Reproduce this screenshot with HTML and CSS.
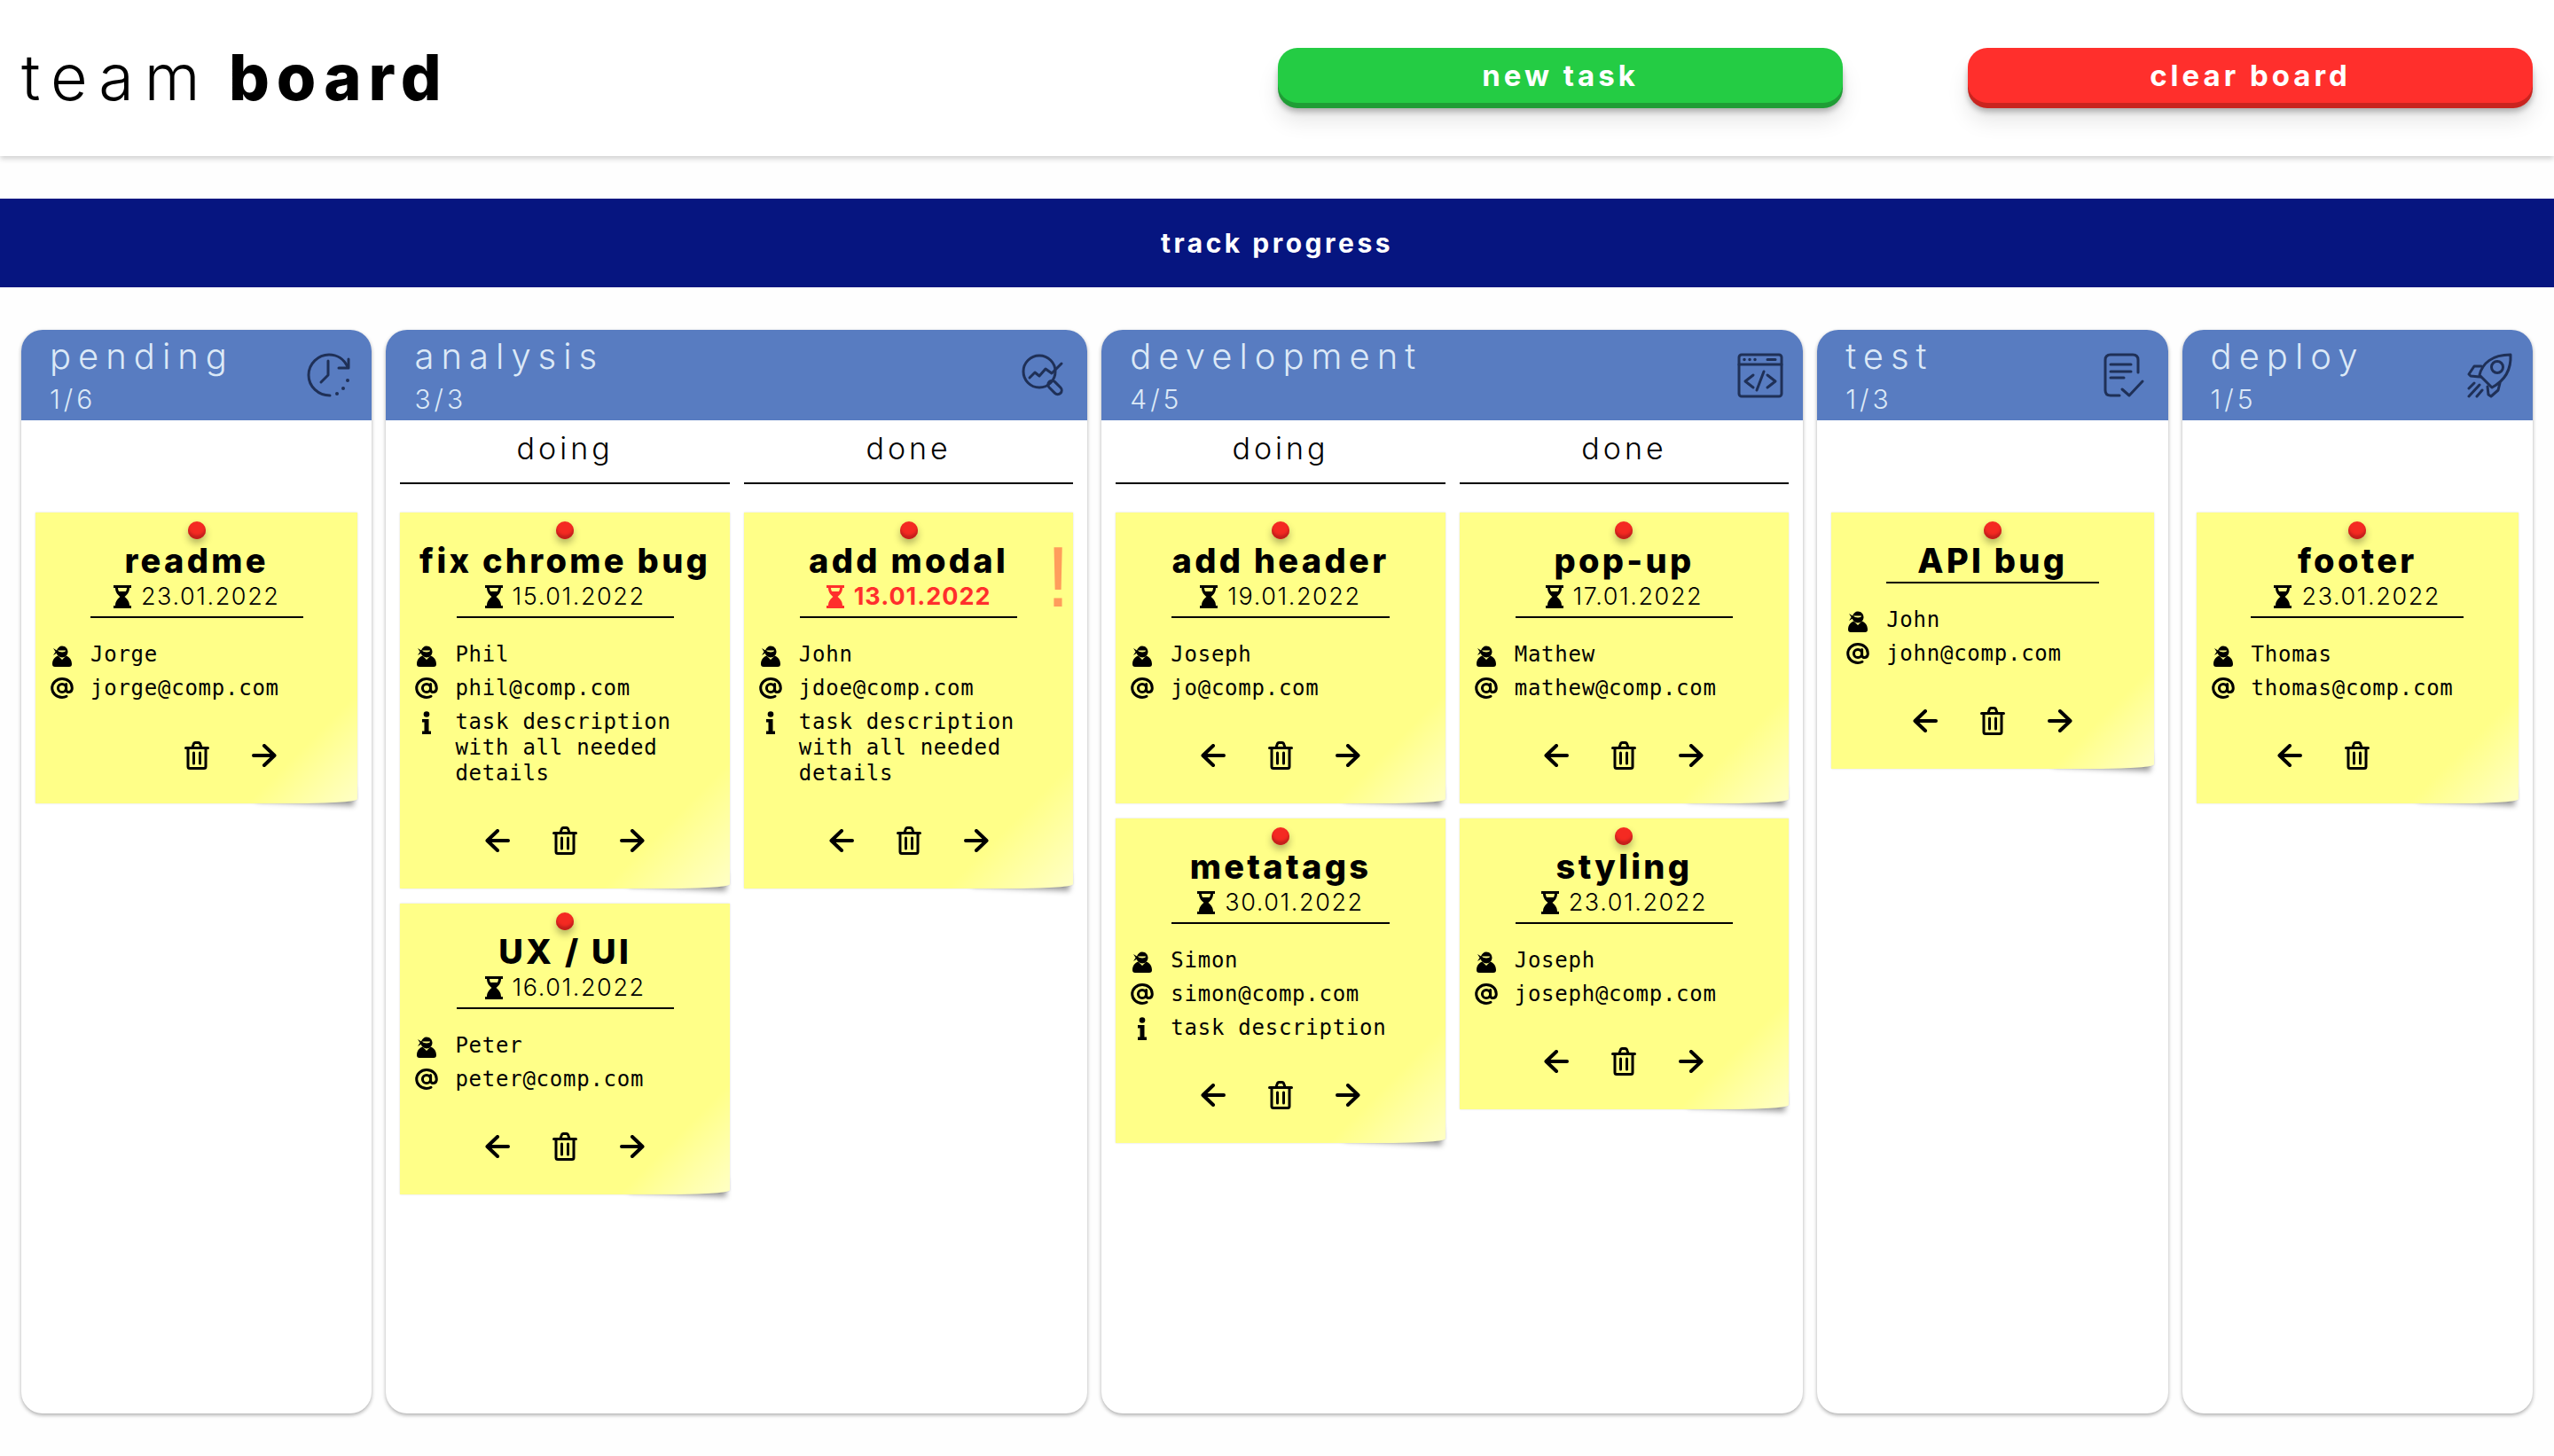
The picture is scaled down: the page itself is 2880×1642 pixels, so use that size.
FILE: index.html
```html
<!DOCTYPE html>
<html lang="en">
  <head>
    <meta charset="UTF-8" />
    <title>team board</title>
    <link rel="stylesheet" href="styles.css">
  </head>
  <body>
    <svg class="sprite" aria-hidden="true">
      <symbol id="i-user" viewBox="0 0 22 26">
        <path d="M1 5l4 2.5c1-3 3.300-5 6-5 3.600 0 6.500 2.900 6.500 6.500s-2.900 6.500-6.500 6.500c-3 0-5.400-2-6.200-4.700L1 13l2.600-4z" fill="currentColor" />
        <path d="M6 7.600h9c.5 2.600-8 2.600-9 0z" fill="#ffff88" />
        <path d="M0 23c0-5 3-8.500 6.500-9.500L11 18l4.500-4.500C19 14.500 22 18 22 23c0 2-1 3-3 3H3c-2 0-3-1-3-3z" fill="currentColor" />
      </symbol>
      <symbol id="i-at" viewBox="0 0 26 24">
        <g fill="none" stroke="currentColor" stroke-width="3" stroke-linecap="round">
          <circle cx="13" cy="12" r="4.600" />
          <path d="M17.600 7.500v6.300c0 4 6.700 4 6.700-1.800C24.300 5.800 19.300 1.500 13 1.500 6.700 1.500 1.700 6.200 1.700 12S6.700 22.500 13 22.500c2 0 3.600-.4 5-1.200" />
        </g>
      </symbol>
      <symbol id="i-info" viewBox="0 0 10 26">
        <circle cx="5" cy="3.500" r="3.300" fill="currentColor" />
        <path d="M0 9h7.500v13.500H10V26H0v-3.500h2.500v-10H0z" fill="currentColor" />
      </symbol>
      <symbol id="i-glass" viewBox="0 0 20 26">
        <path d="M0 0h20v3h-2c0 5-3 8-5.500 10 2.500 2 5.500 5 5.500 10h2v3H0v-3h2c0-5 3-8 5.500-10C5 11 2 8 2 3H0zm5 3c0 1.500.5 3 1.200 4h7.600c.7-1 1.200-2.500 1.200-4z" fill="currentColor" />
      </symbol>
      <symbol id="i-trash" viewBox="0 0 28 32">
        <g fill="none" stroke="currentColor" stroke-width="3" stroke-linecap="round" stroke-linejoin="round">
          <path d="M1.500 7.500h25M9 7l1.200-3.600c.3-1 1-1.900 2-1.900h3.600c1 0 1.700.9 2 1.900L19 7" />
          <path d="M4 7.500v21c0 1.300.7 2 2 2h16c1.300 0 2-.7 2-2v-21M10.500 13v12M17.500 13v12" />
        </g>
      </symbol>
      <symbol id="i-right" viewBox="0 0 28 26">
        <path d="M2 13h23M14 2l11.500 11L14 24" fill="none" stroke="currentColor" stroke-width="4" stroke-linecap="round" stroke-linejoin="round" />
      </symbol>
      <symbol id="i-left" viewBox="0 0 28 26">
        <path d="M26 13H3M14 2L2.500 13 14 24" fill="none" stroke="currentColor" stroke-width="4" stroke-linecap="round" stroke-linejoin="round" />
      </symbol>
    </svg>

    <header class="topbar">
      <h1 class="logo">team <b>board</b></h1>
      <button class="btn btn-green">new task</button>
      <button class="btn btn-red">clear board</button>
    </header>

    <div class="banner">track progress</div>

    <main class="board">
      <!-- pending -->
      <section class="col">
        <div class="col-head">
          <div>
            <h2 class="col-title">pending</h2>
            <div class="col-count">1/6</div>
          </div>
          <svg class="col-icon" viewBox="0 0 52 52">
            <path d="M27 48C14 48 3 38 3 25S14 2 26 2c9 0 17 5 21 14" />
            <path d="M48 7v10H37M25 9v16l-8 8" />
            <path d="M47 31v.1M42 40v.1M35 46v.1" stroke-width="4" />
          </svg>
        </div>
        <div class="lanes lanes-single">
          <div class="lane">
            <article class="note">
              <span class="pin"></span>
              <div class="note-head">
                <h3 class="note-title">readme</h3>
                <div class="note-date"><svg class="ic-glass"><use href="#i-glass" /></svg>23.01.2022</div>
              </div>
              <div class="note-rows">
                <div class="row"><svg class="ic-user"><use href="#i-user" /></svg><span>Jorge</span></div>
                <div class="row"><svg class="ic-at"><use href="#i-at" /></svg><span>jorge@comp.com</span></div>
              </div>
              <div class="actions">
                <span class="slot"></span>
                <svg class="ic-trash"><use href="#i-trash" /></svg>
                <svg class="ic-arrow"><use href="#i-right" /></svg>
              </div>
            </article>
          </div>
        </div>
      </section>

      <!-- analysis -->
      <section class="col">
        <div class="col-head">
          <div>
            <h2 class="col-title">analysis</h2>
            <div class="col-count">3/3</div>
          </div>
          <svg class="col-icon" viewBox="0 0 52 52">
            <circle cx="20" cy="21" r="18" />
            <path d="M9 28l6-6 5 4 7-8 7 5 11-11" />
            <rect x="33" y="30" width="9" height="18" rx="4.500" transform="rotate(-45 37.500 39)" />
          </svg>
        </div>
        <div class="lanes">
          <div class="lane">
            <div class="lane-title">doing</div>
            <article class="note">
              <span class="pin"></span>
              <div class="note-head">
                <h3 class="note-title">fix chrome bug</h3>
                <div class="note-date"><svg class="ic-glass"><use href="#i-glass" /></svg>15.01.2022</div>
              </div>
              <div class="note-rows">
                <div class="row"><svg class="ic-user"><use href="#i-user" /></svg><span>Phil</span></div>
                <div class="row"><svg class="ic-at"><use href="#i-at" /></svg><span>phil@comp.com</span></div>
                <div class="row"><svg class="ic-info"><use href="#i-info" /></svg><span>task description with all needed details</span></div>
              </div>
              <div class="actions">
                <svg class="ic-arrow"><use href="#i-left" /></svg>
                <svg class="ic-trash"><use href="#i-trash" /></svg>
                <svg class="ic-arrow"><use href="#i-right" /></svg>
              </div>
            </article>
            <article class="note">
              <span class="pin"></span>
              <div class="note-head">
                <h3 class="note-title">UX / UI</h3>
                <div class="note-date"><svg class="ic-glass"><use href="#i-glass" /></svg>16.01.2022</div>
              </div>
              <div class="note-rows">
                <div class="row"><svg class="ic-user"><use href="#i-user" /></svg><span>Peter</span></div>
                <div class="row"><svg class="ic-at"><use href="#i-at" /></svg><span>peter@comp.com</span></div>
              </div>
              <div class="actions">
                <svg class="ic-arrow"><use href="#i-left" /></svg>
                <svg class="ic-trash"><use href="#i-trash" /></svg>
                <svg class="ic-arrow"><use href="#i-right" /></svg>
              </div>
            </article>
          </div>
          <div class="lane">
            <div class="lane-title">done</div>
            <article class="note">
              <span class="pin"></span>
              <span class="alert">!</span>
              <div class="note-head">
                <h3 class="note-title">add modal</h3>
                <div class="note-date note-late"><svg class="ic-glass"><use href="#i-glass" /></svg>13.01.2022</div>
              </div>
              <div class="note-rows">
                <div class="row"><svg class="ic-user"><use href="#i-user" /></svg><span>John</span></div>
                <div class="row"><svg class="ic-at"><use href="#i-at" /></svg><span>jdoe@comp.com</span></div>
                <div class="row"><svg class="ic-info"><use href="#i-info" /></svg><span>task description with all needed details</span></div>
              </div>
              <div class="actions">
                <svg class="ic-arrow"><use href="#i-left" /></svg>
                <svg class="ic-trash"><use href="#i-trash" /></svg>
                <svg class="ic-arrow"><use href="#i-right" /></svg>
              </div>
            </article>
          </div>
        </div>
      </section>

      <!-- development -->
      <section class="col">
        <div class="col-head">
          <div>
            <h2 class="col-title">development</h2>
            <div class="col-count">4/5</div>
          </div>
          <svg class="col-icon" viewBox="0 0 52 52">
            <rect x="2" y="2" width="48" height="47" rx="3" />
            <path d="M2 13h48M34 7.500h9M18 25l-9 7 9 7M34 25l9 7-9 7M30 21l-8 21" />
            <path d="M8 7.500v.1M14 7.500v.1M20 7.500v.1" stroke-width="3.500" />
          </svg>
        </div>
        <div class="lanes">
          <div class="lane">
            <div class="lane-title">doing</div>
            <article class="note">
              <span class="pin"></span>
              <div class="note-head">
                <h3 class="note-title">add header</h3>
                <div class="note-date"><svg class="ic-glass"><use href="#i-glass" /></svg>19.01.2022</div>
              </div>
              <div class="note-rows">
                <div class="row"><svg class="ic-user"><use href="#i-user" /></svg><span>Joseph</span></div>
                <div class="row"><svg class="ic-at"><use href="#i-at" /></svg><span>jo@comp.com</span></div>
              </div>
              <div class="actions">
                <svg class="ic-arrow"><use href="#i-left" /></svg>
                <svg class="ic-trash"><use href="#i-trash" /></svg>
                <svg class="ic-arrow"><use href="#i-right" /></svg>
              </div>
            </article>
            <article class="note">
              <span class="pin"></span>
              <div class="note-head">
                <h3 class="note-title">metatags</h3>
                <div class="note-date"><svg class="ic-glass"><use href="#i-glass" /></svg>30.01.2022</div>
              </div>
              <div class="note-rows">
                <div class="row"><svg class="ic-user"><use href="#i-user" /></svg><span>Simon</span></div>
                <div class="row"><svg class="ic-at"><use href="#i-at" /></svg><span>simon@comp.com</span></div>
                <div class="row"><svg class="ic-info"><use href="#i-info" /></svg><span>task description</span></div>
              </div>
              <div class="actions">
                <svg class="ic-arrow"><use href="#i-left" /></svg>
                <svg class="ic-trash"><use href="#i-trash" /></svg>
                <svg class="ic-arrow"><use href="#i-right" /></svg>
              </div>
            </article>
          </div>
          <div class="lane">
            <div class="lane-title">done</div>
            <article class="note">
              <span class="pin"></span>
              <div class="note-head">
                <h3 class="note-title">pop-up</h3>
                <div class="note-date"><svg class="ic-glass"><use href="#i-glass" /></svg>17.01.2022</div>
              </div>
              <div class="note-rows">
                <div class="row"><svg class="ic-user"><use href="#i-user" /></svg><span>Mathew</span></div>
                <div class="row"><svg class="ic-at"><use href="#i-at" /></svg><span>mathew@comp.com</span></div>
              </div>
              <div class="actions">
                <svg class="ic-arrow"><use href="#i-left" /></svg>
                <svg class="ic-trash"><use href="#i-trash" /></svg>
                <svg class="ic-arrow"><use href="#i-right" /></svg>
              </div>
            </article>
            <article class="note">
              <span class="pin"></span>
              <div class="note-head">
                <h3 class="note-title">styling</h3>
                <div class="note-date"><svg class="ic-glass"><use href="#i-glass" /></svg>23.01.2022</div>
              </div>
              <div class="note-rows">
                <div class="row"><svg class="ic-user"><use href="#i-user" /></svg><span>Joseph</span></div>
                <div class="row"><svg class="ic-at"><use href="#i-at" /></svg><span>joseph@comp.com</span></div>
              </div>
              <div class="actions">
                <svg class="ic-arrow"><use href="#i-left" /></svg>
                <svg class="ic-trash"><use href="#i-trash" /></svg>
                <svg class="ic-arrow"><use href="#i-right" /></svg>
              </div>
            </article>
          </div>
        </div>
      </section>

      <!-- test -->
      <section class="col">
        <div class="col-head">
          <div>
            <h2 class="col-title">test</h2>
            <div class="col-count">1/3</div>
          </div>
          <svg class="col-icon" viewBox="0 0 52 52">
            <path d="M40 22V8c0-4-2-6-6-6H9C5 2 3 4 3 8v34c0 4 2 6 6 6h10" />
            <path d="M9 13h23M9 21h23M9 28h15M22 41l8 7 15-16" />
          </svg>
        </div>
        <div class="lanes lanes-single">
          <div class="lane">
            <article class="note">
              <span class="pin"></span>
              <div class="note-head">
                <h3 class="note-title">API bug</h3>
              </div>
              <div class="note-rows">
                <div class="row"><svg class="ic-user"><use href="#i-user" /></svg><span>John</span></div>
                <div class="row"><svg class="ic-at"><use href="#i-at" /></svg><span>john@comp.com</span></div>
              </div>
              <div class="actions">
                <svg class="ic-arrow"><use href="#i-left" /></svg>
                <svg class="ic-trash"><use href="#i-trash" /></svg>
                <svg class="ic-arrow"><use href="#i-right" /></svg>
              </div>
            </article>
          </div>
        </div>
      </section>

      <!-- deploy -->
      <section class="col">
        <div class="col-head">
          <div>
            <h2 class="col-title">deploy</h2>
            <div class="col-count">1/5</div>
          </div>
          <svg class="col-icon" viewBox="0 0 52 52">
            <path d="M14 25C17 12 28 2 49 2c1 19-8 30-21 37z" />
            <circle cx="34" cy="16" r="6.500" />
            <path d="M16 15H8L2 24l2 2 11 1M37 34l-2 8-8 7-3-2-1-9" />
            <path d="M2 40l6-6M2 49l12-13M11 49l6-7" />
          </svg>
        </div>
        <div class="lanes lanes-single">
          <div class="lane">
            <article class="note">
              <span class="pin"></span>
              <div class="note-head">
                <h3 class="note-title">footer</h3>
                <div class="note-date"><svg class="ic-glass"><use href="#i-glass" /></svg>23.01.2022</div>
              </div>
              <div class="note-rows">
                <div class="row"><svg class="ic-user"><use href="#i-user" /></svg><span>Thomas</span></div>
                <div class="row"><svg class="ic-at"><use href="#i-at" /></svg><span>thomas@comp.com</span></div>
              </div>
              <div class="actions">
                <svg class="ic-arrow"><use href="#i-left" /></svg>
                <svg class="ic-trash"><use href="#i-trash" /></svg>
                <span class="slot"></span>
              </div>
            </article>
          </div>
        </div>
      </section>
    </main>
  </body>
</html>
```

FILE: styles.css
```css
* {
  box-sizing: border-box;
}
body {
  margin: 0;
  height: 100vh;
  display: flex;
  flex-direction: column;
  background: #fefefe;
  color: #000;
  font-family: Inter, "Open Sans", sans-serif;
}
.sprite {
  display: none;
}

/* top bar */
.topbar {
  height: 176px;
  padding: 0 24px;
  display: flex;
  align-items: center;
  gap: 141px;
  background: #fff;
  box-shadow: 0 3px 6px rgba(0, 0, 0, 0.18);
}
.logo {
  flex: 1;
  margin: 0 0 4px;
  font-size: 72px;
  font-weight: 300;
  letter-spacing: 12px;
  word-spacing: -12px;
}
.logo b {
  font-weight: 800;
  letter-spacing: 8px;
}
.btn {
  width: 637px;
  height: 62px;
  margin-bottom: 6px;
  border: 0;
  border-radius: 22px;
  color: #fff;
  font-family: inherit;
  font-size: 33px;
  font-weight: 700;
  letter-spacing: 4px;
}
.btn-green {
  background: #24cc44;
  box-shadow: 0 6px 0 #1f9d35, 0 10px 6px rgba(0, 0, 0, 0.25), 0 20px 24px rgba(0, 0, 0, 0.1);
}
.btn-red {
  background: #ff2f2c;
  box-shadow: 0 6px 0 #c9241f, 0 10px 6px rgba(0, 0, 0, 0.25), 0 20px 24px rgba(0, 0, 0, 0.1);
}
.banner {
  height: 100px;
  margin-top: 48px;
  display: flex;
  align-items: center;
  justify-content: center;
  background: #061580;
  color: #fff;
  font-size: 30px;
  font-weight: 700;
  letter-spacing: 3.500px;
}

/* columns */
.board {
  flex: 1;
  margin: 48px 24px;
  display: grid;
  grid-template-columns: 1fr 2fr 2fr 1fr 1fr;
  gap: 16px;
}
.col {
  min-width: 0;
  border-radius: 24px;
  background: #fff;
  box-shadow: 0 2px 4px rgba(0, 0, 0, 0.32);
}
.col-head {
  height: 102px;
  padding: 6px 22px 0 32px;
  display: flex;
  justify-content: space-between;
  border-radius: 24px 24px 0 0;
  background: #587cc1;
  color: #dce9f7;
}
.col-title {
  margin: 0;
  font-size: 40px;
  line-height: 48px;
  font-weight: 300;
  letter-spacing: 8px;
}
.col-count {
  margin-top: 7px;
  font-size: 30px;
  line-height: 34px;
  font-weight: 300;
  letter-spacing: 4px;
}
.col-icon {
  width: 52px;
  height: 52px;
  margin-top: 20px;
  fill: none;
  stroke: #1f3057;
  stroke-width: 3;
  stroke-linecap: round;
  stroke-linejoin: round;
}
.lanes {
  padding: 0 16px;
  display: flex;
  gap: 16px;
}
.lanes-single {
  padding-top: 104px;
}
.lane {
  flex: 1;
  min-width: 0;
  isolation: isolate;
}
.lane-title {
  height: 72px;
  margin-bottom: 32px;
  border-bottom: 2px solid #000;
  text-align: center;
  font-size: 34px;
  line-height: 64px;
  font-weight: 300;
  letter-spacing: 4px;
}

/* sticky notes */
.note {
  position: relative;
  margin-bottom: 17px;
  padding: 30px 0 38px;
  background: linear-gradient(135deg, #ffff88 81%, #ffff88 82%, #ffffc6 100%);
  border-bottom-right-radius: 60px 5px;
  box-shadow: 0 0 2px rgba(0, 0, 0, 0.18);
}
.note::after {
  content: "";
  position: absolute;
  z-index: -1;
  right: 2px;
  bottom: 14px;
  width: 110px;
  height: 20px;
  background: rgba(0, 0, 0, 0.2);
  box-shadow: 2px 14px 6px rgba(0, 0, 0, 0.4);
  transform: matrix(-1, -0.05, 0, 1, 0, 0);
}
.pin {
  position: absolute;
  top: 10px;
  left: calc(50% - 10px);
  width: 20px;
  height: 20px;
  border-radius: 50%;
  background: #f42a22;
  box-shadow: inset 0 -4px 3px #c31f1c, 0 5px 8px rgba(0, 0, 0, 0.3);
}
.alert {
  position: absolute;
  top: 18px;
  right: 4px;
  color: #ff9d5c;
  font-family: "Liberation Sans", sans-serif;
  font-size: 96px;
  line-height: 110px;
}
.note-head {
  width: 66%;
  margin: 0 auto;
  border-bottom: 2px solid #000;
  text-align: center;
}
.note-title {
  margin: 0 -60px;
  font-size: 38px;
  line-height: 48px;
  font-weight: 800;
  letter-spacing: 3.300px;
  white-space: nowrap;
}
.note-date {
  height: 39px;
  margin: 0 -40px;
  padding-top: 1px;
  display: flex;
  align-items: flex-start;
  justify-content: center;
  gap: 11px;
  font-size: 27px;
  line-height: 32px;
  font-weight: 300;
  letter-spacing: 1.600px;
}
.note-late {
  color: #ff2f2c;
  font-weight: 700;
  letter-spacing: 1px;
}
.ic-glass {
  width: 20px;
  height: 26px;
  margin-top: 3px;
}
.note-rows {
  margin-top: 27px;
  padding: 0 18px;
  display: flex;
  flex-direction: column;
  gap: 9px;
  font-family: "DejaVu Sans Mono", monospace;
  font-size: 24px;
  line-height: 29px;
  letter-spacing: 0.750px;
}
.row {
  display: grid;
  grid-template-columns: 24px 1fr;
  column-gap: 20px;
  align-items: start;
}
.row svg {
  justify-self: center;
  margin-top: 2px;
}
.ic-user {
  width: 24px;
  height: 26px;
}
.ic-at {
  width: 26px;
  height: 24px;
}
.ic-info {
  width: 10px;
  height: 26px;
}
.actions {
  height: 32px;
  margin-top: 45px;
  display: flex;
  align-items: center;
  justify-content: center;
  gap: 48px;
}
.ic-trash {
  width: 28px;
  height: 32px;
}
.ic-arrow,
.slot {
  width: 28px;
  height: 26px;
}
```
